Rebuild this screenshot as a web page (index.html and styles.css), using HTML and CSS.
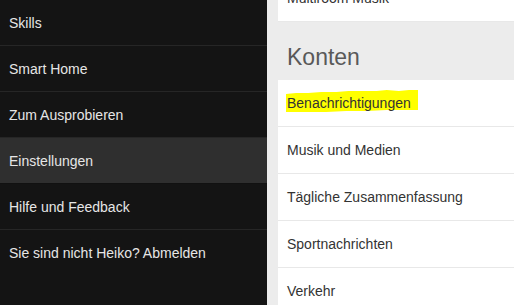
FILE: index.html
```html
<!DOCTYPE html>
<html lang="de">
<head>
    <meta charset="UTF-8">
    <meta name="viewport" content="width=device-width, initial-scale=1.0">
    <title>Einstellungen</title>
    <link rel="stylesheet" href="styles.css">
</head>
<body>
    <div class="app">
        <nav class="sidebar">
            <a class="nav-item">Skills</a>
            <a class="nav-item">Smart Home</a>
            <a class="nav-item">Zum Ausprobieren</a>
            <a class="nav-item active">Einstellungen</a>
            <a class="nav-item">Hilfe und Feedback</a>
            <a class="nav-item last">Sie sind nicht Heiko? Abmelden</a>
        </nav>
        <main class="settings">
            <div class="card first">
                <div class="row">Multiroom Musik</div>
            </div>
            <h2 class="section-title">Konten</h2>
            <div class="card">
                <div class="row">
                    <span class="marked">
                        <svg class="marker" viewBox="0 0 131 23" preserveAspectRatio="none">
                            <polygon points="0,4 10,3 22,3 35,2 50,2 62,1 78,1 90,1 100,0 112,1 122,0 131,0 131,20 118,20 100,20 80,21 60,21 40,22 20,22 0,22"/>
                        </svg>
                        <span class="marked-text">Benachrichtigungen</span>
                    </span>
                </div>
                <div class="row">Musik und Medien</div>
                <div class="row">Tägliche Zusammenfassung</div>
                <div class="row">Sportnachrichten</div>
                <div class="row">Verkehr</div>
            </div>
        </main>
    </div>
</body>
</html>
```

FILE: styles.css
```css
body {
    margin: 0;
    font-family: "Liberation Sans", Arial, sans-serif;
    font-size: 14px;
    overflow: hidden;
}
.app {
    display: flex;
    height: 305px;
}
.sidebar {
    width: 267px;
    flex: none;
    background-color: #141414;
    display: flex;
    flex-direction: column;
}
.nav-item {
    height: 45px;
    display: flex;
    align-items: center;
    padding-left: 9px;
    color: #e6e6e6;
    border-bottom: 1px solid #262626;
    cursor: pointer;
}
.nav-item.active {
    background-color: #2f2f2f;
    border-bottom-color: #111;
}
.nav-item.last {
    border-bottom: none;
}
.settings {
    flex: 1;
    background-color: #ececec;
    padding-left: 11px;
}
.card {
    background-color: white;
}
.card.first {
    margin-top: -25px;
}
.row {
    height: 46px;
    display: flex;
    align-items: center;
    padding-left: 9px;
    color: #333;
    border-bottom: 1px solid #e8e8e8;
}
.section-title {
    margin: 0;
    height: 58px;
    box-sizing: border-box;
    padding: 21px 0 0 9px;
    font-size: 23px;
    line-height: 28px;
    font-weight: normal;
    color: #595959;
}
.marked {
    position: relative;
    display: inline-block;
}
.marker {
    position: absolute;
    left: -1px;
    top: -5px;
    width: 132px;
    height: 23px;
    fill: #ffff00;
}
.marked-text {
    position: relative;
}
```
